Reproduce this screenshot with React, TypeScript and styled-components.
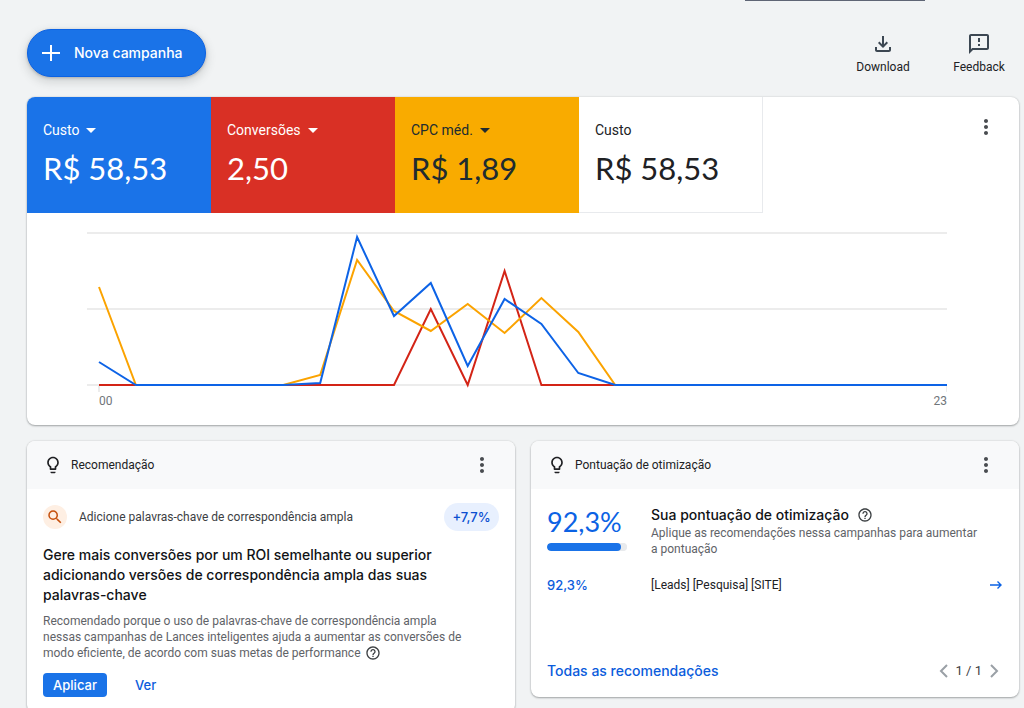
import React from "react";
import styled, { createGlobalStyle, css } from "styled-components";
import {
  MdArrowDropDown,
  MdHelpOutline,
  MdLightbulbOutline,
  MdMoreVert,
  MdOutlineFeedback,
  MdOutlineFileDownload,
  MdSearch,
} from "react-icons/md";

const figures = `Lato, "Liberation Sans", sans-serif`;
const display = `Inter, "Liberation Sans", sans-serif`;
const body = `Roboto, "Liberation Sans", sans-serif`;

const GlobalStyle = createGlobalStyle`
  *, *::before, *::after { box-sizing: border-box; }
  html { scrollbar-width: none; }
  body {
    margin: 0;
    background: #f1f3f4;
    color: #202124;
    font: 400 12px/16px ${body};
  }
  h2, h3, p { margin: 0; }
  button { border: 0; padding: 0; background: none; color: inherit; font: inherit; cursor: pointer; }
  a { color: inherit; text-decoration: none; }
  svg { display: block; flex: none; }
`;

const Page = styled.div`
  display: flex;
  flex-direction: column;
  padding: 0 5px 16px 27px;
`;

const PanelEdge = styled.div`
  align-self: flex-end;
  width: 180px;
  height: 1px;
  margin-right: 94px;
  background: #5f6575;
`;

const Toolbar = styled.header`
  display: flex;
  align-items: center;
  justify-content: space-between;
  height: 48px;
  margin: 28px 0 20px;
`;

const CreateButton = styled.button`
  display: flex;
  align-items: center;
  gap: 14px;
  height: 48px;
  padding: 0 22px 0 14px;
  border-radius: 24px;
  border: 1px solid #0b62e4;
  background: #1a73e8;
  color: #fff;
  font: 500 14px/20px ${display};
  box-shadow: 0 1px 3px rgba(60, 64, 67, 0.3), 0 4px 8px 2px rgba(60, 64, 67, 0.15);
`;

const ToolActions = styled.div`
  display: flex;
  gap: 40px;
  padding-right: 12px;
`;

const ToolButton = styled.button`
  display: flex;
  flex-direction: column;
  align-items: center;
  gap: 3px;
  min-width: 56px;
  svg { color: #3c4752; }
`;

const Card = styled.section`
  display: flex;
  flex-direction: column;
  border-radius: 8px;
  background: #fff;
  overflow: hidden;
  box-shadow: 0 1px 2px rgba(60, 64, 67, 0.4), 0 0 2px rgba(60, 64, 67, 0.2);
`;

const Metrics = styled.div`
  display: flex;
`;

type Tone = "blue" | "red" | "amber" | "plain";

const tones = {
  blue: css`background: #1a73e8; color: #fff;`,
  red: css`background: #d93025; color: #fff;`,
  amber: css`background: #f9ab00; color: #202b30;`,
  plain: css`
    background: #fff;
    border: solid #e8eaed;
    border-width: 0 1px 1px 0;
  `,
};

const Metric = styled.div<{ $tone: Tone }>`
  display: flex;
  flex-direction: column;
  align-items: flex-start;
  gap: 8px;
  width: 184px;
  height: 116px;
  padding: 21px 16px 0;
  ${(p) => tones[p.$tone]}
`;

const MetricLabel = styled.span`
  display: flex;
  align-items: center;
  height: 24px;
  font-size: 14px;
`;

const MetricValue = styled.span`
  font: 400 31px/36px ${figures};
`;

const MenuButton = styled.button<{ $top?: boolean }>`
  margin-left: auto;
  margin-right: 21px;
  color: #494c50;
  ${(p) => p.$top && css`align-self: flex-start; margin-top: 18px;`}
`;

const Plot = styled.div`
  padding: 18px 72px 16px 60px;
  svg { width: 100%; height: 162px; }
`;

const Axis = styled.div`
  display: flex;
  justify-content: space-between;
  padding-left: 12px;
  color: #70757a;
`;

const Columns = styled.main`
  display: grid;
  grid-template-columns: 1fr 1fr;
  align-items: start;
  gap: 16px;
  margin-top: 16px;
`;

const CardHeader = styled.div`
  display: flex;
  align-items: center;
  gap: 8px;
  height: 48px;
  padding-left: 16px;
  background: #f8f9fa;
  h2 { font: 400 12px/16px ${body}; }
`;

const CardBody = styled.div`
  display: flex;
  flex-direction: column;
  padding: 14px 16px 16px;
`;

const Row = styled.div`
  display: flex;
  align-items: center;
`;

const SearchBadge = styled.span`
  display: grid;
  place-items: center;
  width: 24px;
  height: 24px;
  margin-right: 12px;
  border-radius: 50%;
  background: #feefe3;
  color: #c5500c;
`;

const Kind = styled.span`
  color: #3c4043;
`;

const Uplift = styled.span`
  display: grid;
  place-items: center;
  width: 55px;
  height: 28px;
  margin-left: auto;
  border-radius: 14px;
  background: #e8f0fe;
  color: #0b4fd0;
  font: 500 13px/20px ${display};
`;

const Title = styled.h3`
  color: #111316;
  font: 500 14px/20px ${display};
`;

const Details = styled.p`
  color: #5f6368;
  svg { display: inline-block; vertical-align: -4px; margin-left: 4px; color: #3c4043; }
`;

const Recommendation = styled.div`
  display: flex;
  flex-direction: column;
  gap: 8px;
  margin: 14px 0 12px;
  padding-right: 26px;
`;

const Apply = styled.button`
  width: 64px;
  height: 24px;
  margin-right: 28px;
  border-radius: 4px;
  background: #1a73e8;
  color: #fff;
  font: 500 13px/20px ${display};
`;

const TextLink = styled.a`
  color: #0b5cdc;
  font: 500 13px/20px ${display};
`;

const ScoreBody = styled.div`
  display: grid;
  grid-template-columns: 80px 1fr;
  column-gap: 24px;
  padding: 16px 40px 0 16px;
`;

const Score = styled.div`
  color: #0b62e4;
  font: 400 27px/34px ${figures};
  progress {
    display: block;
    width: 80px;
    height: 8px;
    margin-top: 4px;
    appearance: none;
    border: 0;
    border-radius: 4px;
    background: #e8eaed;
    overflow: hidden;
  }
  progress::-webkit-progress-bar { background: #e8eaed; border-radius: 4px; }
  progress::-webkit-progress-value { background: #1a73e8; border-radius: 4px; }
`;

const ScoreTitle = styled.div`
  display: flex;
  align-items: center;
  gap: 8px;
  svg { color: #3c4043; }
`;

const CampaignLink = styled.a`
  display: grid;
  grid-template-columns: 80px 1fr auto;
  column-gap: 24px;
  align-items: center;
  margin-top: 18px;
  padding: 0 17px 0 16px;
  strong { color: #0b5cdc; font: 500 13px/20px ${display}; }
`;

const CardFooter = styled.div`
  display: flex;
  align-items: center;
  justify-content: space-between;
  margin-top: 66px;
  padding: 0 20px 16px 16px;
`;

const FooterLink = styled(TextLink)`
  font-size: 14px;
`;

const Pager = styled.div`
  display: flex;
  align-items: center;
  gap: 8px;
  color: #3c4043;
  font-size: 13px;
  svg { color: #9aa0a6; }
`;

const metrics: { label: string; value: string; tone: Tone; menu: boolean }[] = [
  { label: "Custo", value: "R$ 58,53", tone: "blue", menu: true },
  { label: "Conversões", value: "2,50", tone: "red", menu: true },
  { label: "CPC méd.", value: "R$ 1,89", tone: "amber", menu: true },
  { label: "Custo", value: "R$ 58,53", tone: "plain", menu: false },
];

const HOURS = 24;
const BASE = 154;
const pad = (values: number[]) => [...values, ...Array(HOURS - values.length).fill(0)];

const series = [
  { color: "#d32416", values: pad([0, 0, 0, 0, 0, 0, 0, 0, 0, 76, 0, 114]) },
  { color: "#fba300", values: pad([98, 0, 0, 0, 0, 0, 10, 125, 74, 54, 81, 52, 87, 53]) },
  { color: "#0d63e6", values: pad([23, 0, 0, 0, 0, 0, 2, 148, 69, 102, 19, 86, 61, 12]) },
];

const toPoints = (values: number[]) =>
  values.map((v, hour) => `${(12 + (hour * 848) / (HOURS - 1)).toFixed(1)},${BASE - v}`).join(" ");

const Chart = () => (
  <svg viewBox="0 0 860 162" preserveAspectRatio="none" role="img" aria-label="Desempenho por hora">
    {[2, 78, 154].map((y) => (
      <line key={y} x1="0" x2="860" y1={y} y2={y} stroke="#ececec" strokeWidth="2" />
    ))}
    <path d="M12 154v7M860 154v7" stroke="#ececec" strokeWidth="2" />
    {series.map((s) => (
      <polyline
        key={s.color}
        points={toPoints(s.values)}
        fill="none"
        stroke={s.color}
        strokeWidth="2"
        vectorEffect="non-scaling-stroke"
      />
    ))}
  </svg>
);

const Chevron = ({ d }: { d: string }) => (
  <svg width="9" height="14" viewBox="0 0 9 14" fill="none" stroke="currentColor" strokeWidth="2">
    <path d={d} />
  </svg>
);

const CardMenu = ({ top }: { top?: boolean }) => (
  <MenuButton $top={top} aria-label="Mais opções">
    <MdMoreVert size={24} />
  </MenuButton>
);

export default function App() {
  return (
    <Page>
      <GlobalStyle />
      <PanelEdge />
      <Toolbar>
        <CreateButton>
          <svg width="18" height="18" viewBox="0 0 18 18" fill="none" stroke="currentColor" strokeWidth="2">
            <path d="M9 1v16M0 9h18" />
          </svg>
          Nova campanha
        </CreateButton>
        <ToolActions>
          <ToolButton>
            <MdOutlineFileDownload size={24} />
            Download
          </ToolButton>
          <ToolButton>
            <MdOutlineFeedback size={24} />
            Feedback
          </ToolButton>
        </ToolActions>
      </Toolbar>

      <Card>
        <Metrics>
          {metrics.map((m) => (
            <Metric key={m.tone} $tone={m.tone}>
              {m.menu ? (
                <MetricLabel as="button">
                  {m.label}
                  <MdArrowDropDown size={24} />
                </MetricLabel>
              ) : (
                <MetricLabel>{m.label}</MetricLabel>
              )}
              <MetricValue>{m.value}</MetricValue>
            </Metric>
          ))}
          <CardMenu top />
        </Metrics>
        <Plot>
          <Chart />
          <Axis>
            <span>00</span>
            <span>23</span>
          </Axis>
        </Plot>
      </Card>

      <Columns>
        <Card>
          <CardHeader>
            <MdLightbulbOutline size={20} />
            <h2>Recomendação</h2>
            <CardMenu />
          </CardHeader>
          <CardBody>
            <Row>
              <SearchBadge>
                <MdSearch size={18} />
              </SearchBadge>
              <Kind>Adicione palavras-chave de correspondência ampla</Kind>
              <Uplift>+7,7%</Uplift>
            </Row>
            <Recommendation>
              <Title>
                Gere mais conversões por um ROI semelhante ou superior adicionando versões de
                correspondência ampla das suas palavras-chave
              </Title>
              <Details>
                Recomendado porque o uso de palavras-chave de correspondência ampla nessas campanhas
                de Lances inteligentes ajuda a aumentar as conversões de modo eficiente, de acordo com
                suas metas de performance
                <MdHelpOutline size={16} />
              </Details>
            </Recommendation>
            <Row>
              <Apply>Aplicar</Apply>
              <TextLink href="#ver">Ver</TextLink>
            </Row>
          </CardBody>
        </Card>

        <Card>
          <CardHeader>
            <MdLightbulbOutline size={20} />
            <h2>Pontuação de otimização</h2>
            <CardMenu />
          </CardHeader>
          <ScoreBody>
            <Score>
              92,3%
              <progress value={92.3} max={100} aria-label="Pontuação de otimização" />
            </Score>
            <div>
              <ScoreTitle>
                <Title>Sua pontuação de otimização</Title>
                <MdHelpOutline size={16} />
              </ScoreTitle>
              <Details>Aplique as recomendações nessa campanhas para aumentar a pontuação</Details>
            </div>
          </ScoreBody>
          <CampaignLink href="#campanha">
            <strong>92,3%</strong>
            <span>[Leads] [Pesquisa] [SITE]</span>
            <svg width="12" height="8" viewBox="0 0 12 8" fill="none" stroke="#0b62e4" strokeWidth="1.4">
              <path d="M0 4h11M7.5 0.5L11 4L7.5 7.5" />
            </svg>
          </CampaignLink>
          <CardFooter>
            <FooterLink href="#recomendacoes">Todas as recomendações</FooterLink>
            <Pager>
              <button aria-label="Anterior">
                <Chevron d="M8 1L2 7L8 13" />
              </button>
              1 / 1
              <button aria-label="Próxima">
                <Chevron d="M1 1L7 7L1 13" />
              </button>
            </Pager>
          </CardFooter>
        </Card>
      </Columns>
    </Page>
  );
}
